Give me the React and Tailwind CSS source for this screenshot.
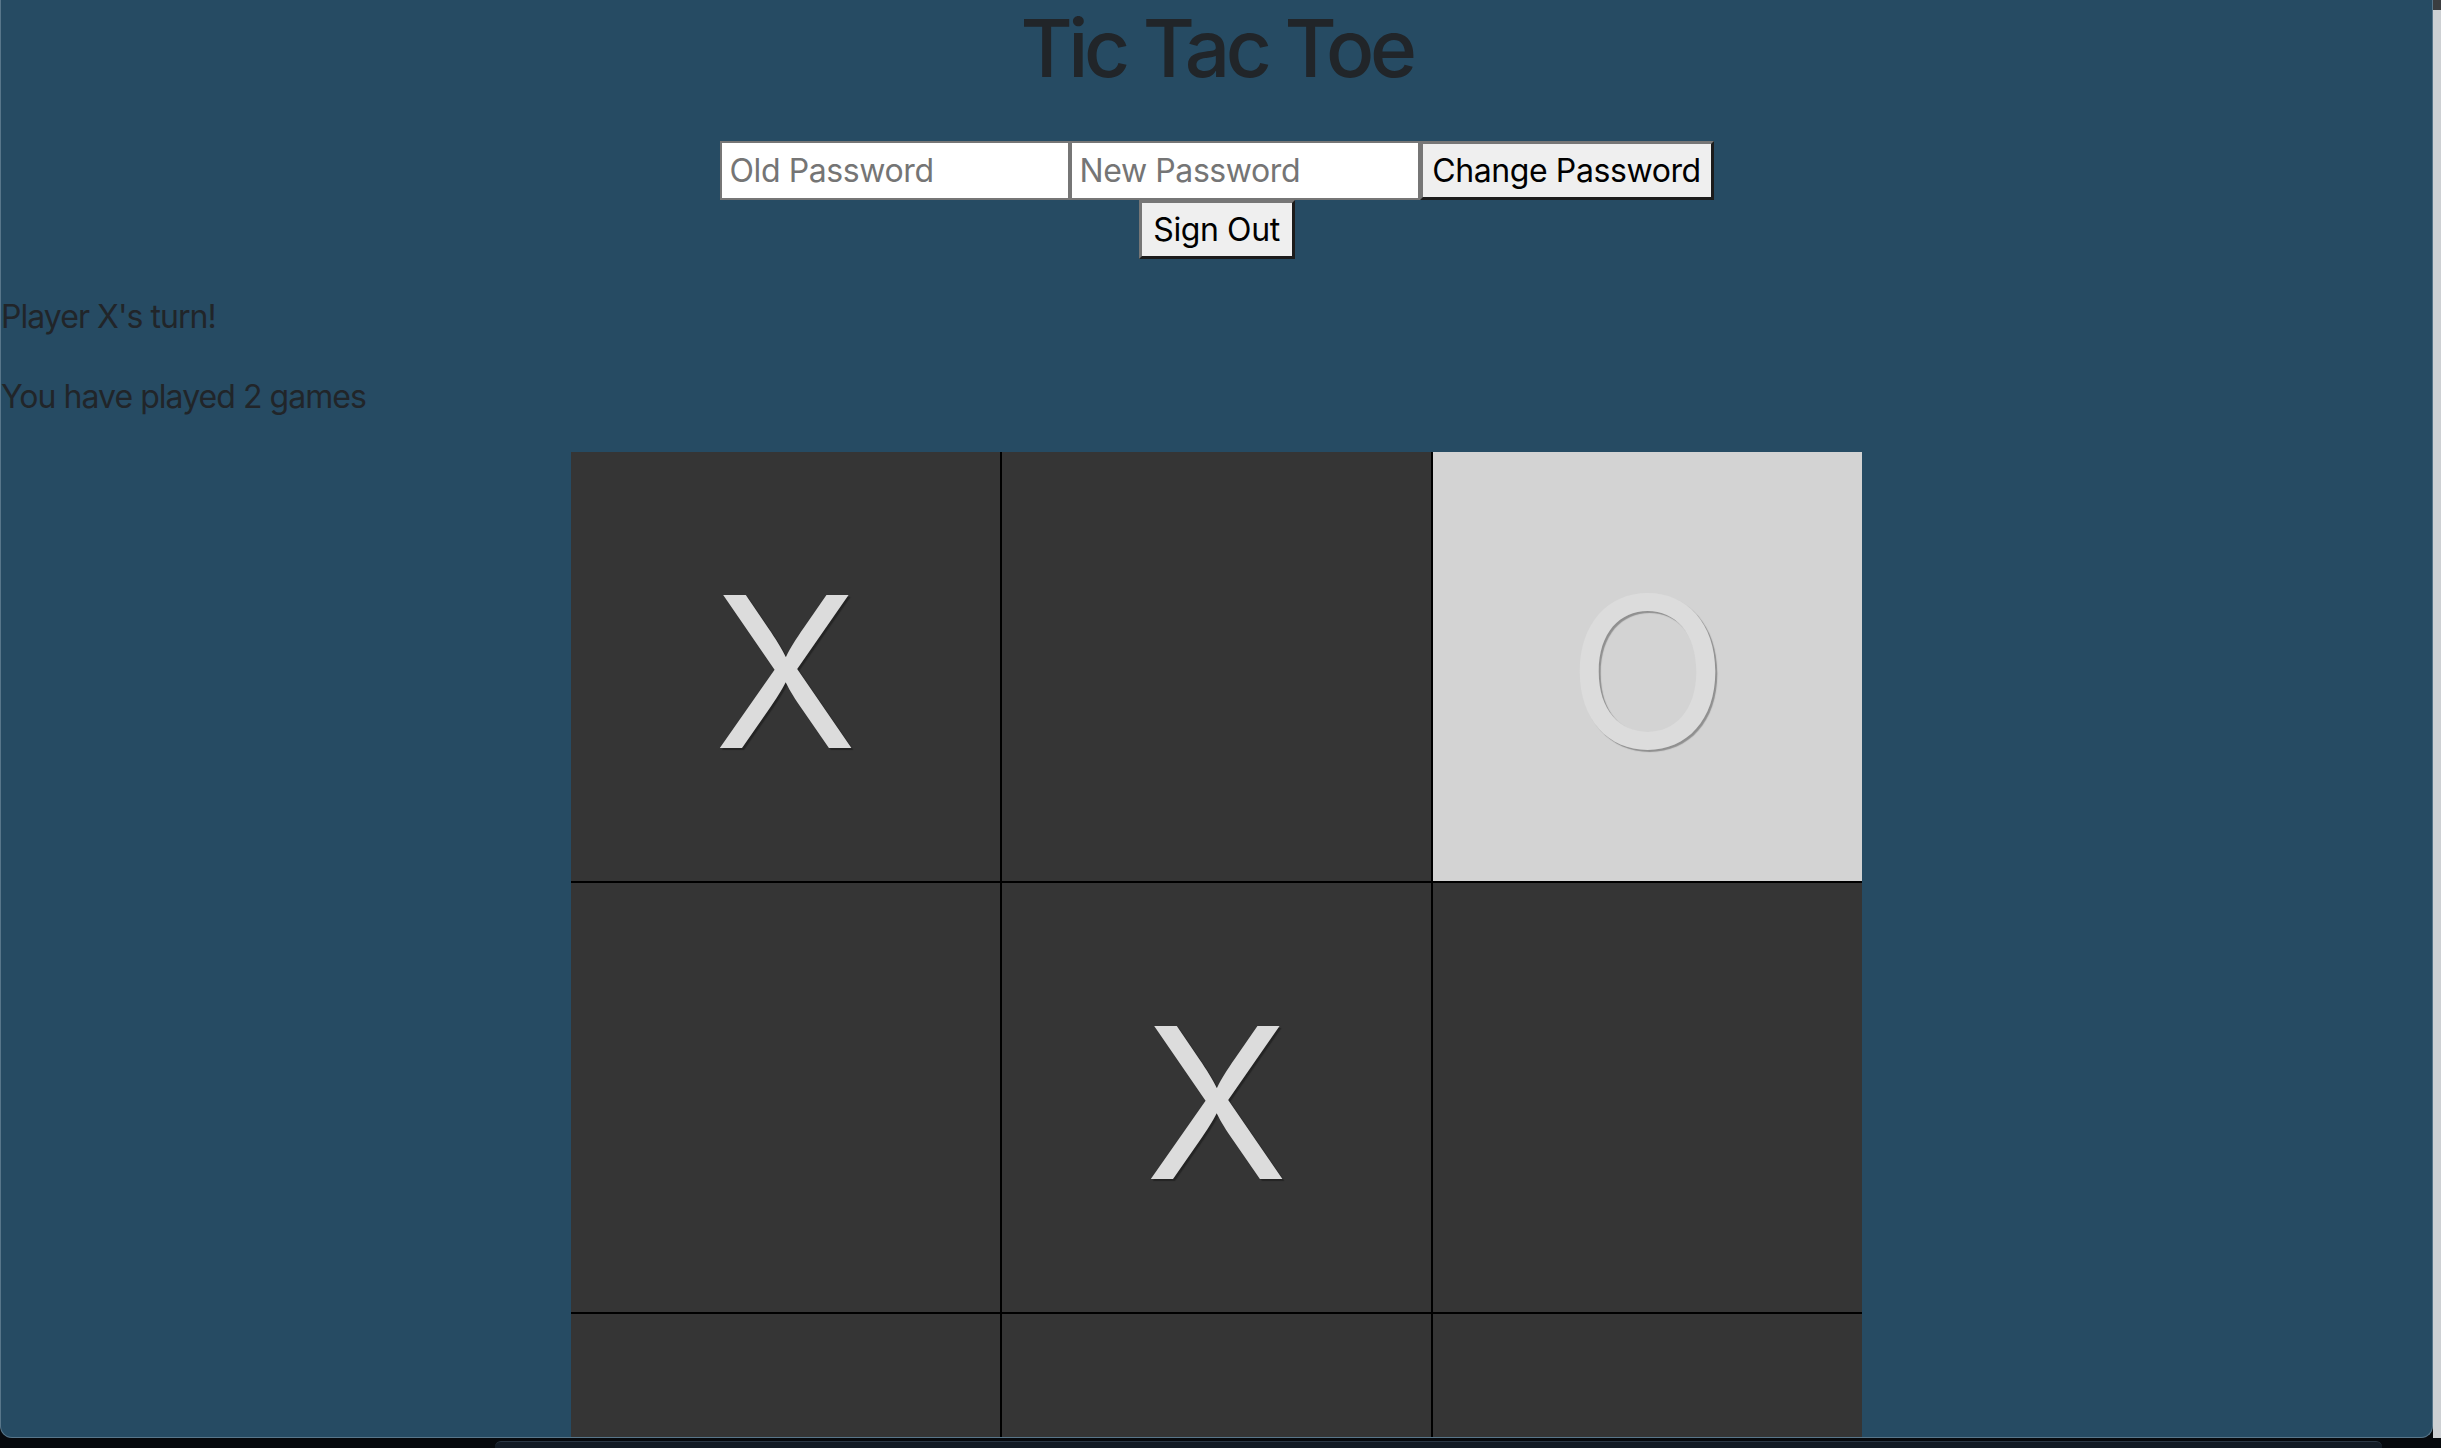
const board = ['X', '', 'O', '', 'X', '', '', '', '']

const Cell = ({ value, highlight }) => (
  <div
    className={`flex items-center justify-center pt-[10px] text-[210px] leading-none text-[#dcdcdc] [text-shadow:2px_2px_1px_rgba(0,0,0,0.32)] ${
      highlight ? 'bg-[#d3d3d3]' : 'bg-[#353535]'
    }`}
  >
    {value}
  </div>
)

const App = () => {
  return (
    <div className="w-[2441px] h-[1448px] bg-[#06090d] overflow-hidden flex flex-col font-['Inter',sans-serif]">
      <div className="flex h-[1438px]">
        {/* browser window */}
        <div className="w-[2433px] h-full bg-[#264b63] border-l border-b border-r border-[#58768a] rounded-b-[12px] overflow-hidden">
          <h1 className="text-center text-[80px] leading-[96px] font-medium tracking-[-0.055em] text-[#212529]">Tic Tac Toe</h1>

          <div className="mt-[45px] flex justify-center tracking-[-0.025em]">
            <input
              placeholder="Old Password"
              className="w-[350px] h-[59px] bg-white border-2 border-[#767676] px-[8px] text-[32px] text-black placeholder:text-[#757575] outline-none"
            />
            <input
              placeholder="New Password"
              className="w-[350px] h-[59px] bg-white border-2 border-[#767676] px-[8px] text-[32px] text-black placeholder:text-[#757575] outline-none"
            />
            <button className="w-[294px] h-[59px] bg-[#efefef] border-[3px] border-t-[#767676] border-l-[#767676] border-r-[#1c1c1c] border-b-[#1c1c1c] text-[32px] text-black">
              Change Password
            </button>
          </div>
          <div className="flex justify-center tracking-[-0.025em]">
            <button className="w-[156px] h-[59px] bg-[#efefef] border-[3px] border-t-[#767676] border-l-[#767676] border-r-[#1c1c1c] border-b-[#1c1c1c] text-[32px] text-black">
              Sign Out
            </button>
          </div>

          <div className="tracking-[-0.03em] text-[32px] leading-[48px] text-[#212529]">
            <p className="mt-[34px] mb-[32px]">Player X's turn!</p>
            <p className="mb-[31px]">You have played 2 games</p>
          </div>

          <div className="mx-auto w-[1291px] grid grid-cols-[429px_429px_429px] auto-rows-[429px] gap-[2px] bg-black">
            {board.map((v, i) => (
              <Cell key={i} value={v} highlight={i === 2} />
            ))}
          </div>
        </div>

        {/* window behind */}
        <div className="flex-1 flex flex-col bg-[#cdd0d3]">
          <div className="h-[10px] bg-[#3a3d40]" />
        </div>
      </div>

      <div className="flex-1 pl-[495px] pr-[59px] pt-[3px]">
        <div className="h-full bg-[#131b25] border-t border-[#2c3846] rounded-t-[6px]" />
      </div>
    </div>
  )
}

export default App
